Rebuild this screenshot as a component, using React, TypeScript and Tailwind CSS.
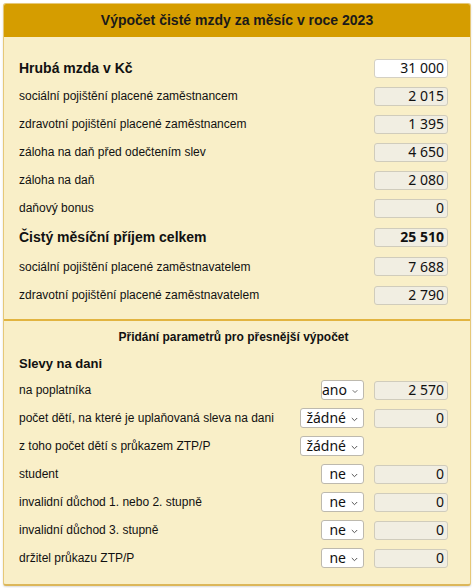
import React from 'react';

type Row = { label: string; value: string; bold?: boolean; editable?: boolean; h?: string };

const mainRows: Row[] = [
  { label: 'Hrubá mzda v Kč', value: '31 000', bold: true, editable: true },
  { label: 'sociální pojištění placené zaměstnancem', value: '2 015' },
  { label: 'zdravotní pojištění placené zaměstnancem', value: '1 395' },
  { label: 'záloha na daň před odečtením slev', value: '4 650' },
  { label: 'záloha na daň', value: '2 080' },
  { label: 'daňový bonus', value: '0' },
  { label: 'Čistý měsíční příjem celkem', value: '25 510', bold: true, h: 'h-[30px]' },
  { label: 'sociální pojištění placené zaměstnavatelem', value: '7 688', h: 'h-[29px]' },
  { label: 'zdravotní pojištění placené zaměstnavatelem', value: '2 790' },
];

type Param = { label: string; option: string; value?: string; wide?: boolean };

const params: Param[] = [
  { label: 'na poplatníka', option: 'ano', value: '2 570' },
  { label: 'počet dětí, na které je uplaňovaná sleva na dani', option: 'žádné', value: '0', wide: true },
  { label: 'z toho počet dětí s průkazem ZTP/P', option: 'žádné', wide: true },
  { label: 'student', option: 'ne', value: '0' },
  { label: 'invalidní důchod 1. nebo 2. stupně', option: 'ne', value: '0' },
  { label: 'invalidní důchod 3. stupně', option: 'ne', value: '0' },
  { label: 'držitel průkazu ZTP/P', option: 'ne', value: '0' },
];

const valueFont = "font-['Noto_Sans',sans-serif]";

// value field: white when editable, greyish when read-only
const ValueBox = ({ value, strong, editable }: { value: string; strong?: boolean; editable?: boolean }) => (
  <div
    className={`w-[74px] h-[19px] rounded-[3px] border flex items-center justify-end pr-[3px] leading-none text-[14px] text-[#111] ${valueFont} ${
      editable ? 'bg-white border-[#d4d0c4]' : 'bg-[#f1eee2] border-[#d0ccbc]'
    } ${strong ? 'font-bold' : ''}`}
  >
    {value}
  </div>
);

const Select = ({ option, wide }: { option: string; wide?: boolean }) => (
  <div
    className={`${wide ? 'w-[64px]' : 'w-[43px]'} h-[20px] rounded-[3px] border border-[#bdb9ae] bg-white flex items-center justify-end gap-[5px] pr-[5px] text-[#111] leading-none text-[14px] ${valueFont}`}
  >
    <span>{option}</span>
    <svg width="7" height="5" viewBox="0 0 7 5" className="mt-[2px]">
      <path d="M0.8 1 L3.5 3.7 L6.2 1" fill="none" stroke="#555" strokeWidth="1" />
    </svg>
  </div>
);

export default function App() {
  return (
    <div className="w-[474px] h-[588px] bg-white p-[3px] pb-[2px] font-['Liberation_Sans',Arial,sans-serif] text-[#111]">
      <div className="h-full flex flex-col border border-[#e6c878] border-b-2 border-b-[#dcb75a] rounded-[3px] overflow-hidden bg-[#f9efc8] shadow-[0_1px_2px_rgba(0,0,0,0.15)]">
        {/* header */}
        <div className="h-[33px] shrink-0 bg-[#d59d00] flex items-center justify-center font-bold text-[14px] text-[#1a1a1a]">
          Výpočet čisté mzdy za měsíc v roce 2023
        </div>

        {/* results */}
        <div className="pt-[17px] pb-[10px] pl-[15px] pr-[22px]">
          {mainRows.map((r) => (
            <div key={r.label} className={`${r.h ?? 'h-[28px]'} flex items-center justify-between`}>
              <span className={r.bold ? 'font-bold text-[14px]' : 'text-[12px]'}>{r.label}</span>
              <ValueBox value={r.value} strong={r.bold && !r.editable} editable={r.editable} />
            </div>
          ))}
        </div>

        <div className="h-[2px] shrink-0 bg-[#e2b440]" />

        {/* parameters */}
        <div className="pt-[6px] pl-[15px] pr-[22px]">
          <div className="h-[20px] flex items-center justify-center font-bold text-[12px]">
            Přidání parametrů pro přesnější výpočet
          </div>
          <div className="h-[24px] mt-[5px] flex items-center font-bold text-[13px]">Slevy na dani</div>
          {params.map((p) => (
            <div key={p.label} className="h-[28px] flex items-center justify-between">
              <span className="text-[12px]">{p.label}</span>
              <div className="flex items-center gap-[10px]">
                <Select option={p.option} wide={p.wide} />
                {p.value !== undefined ? <ValueBox value={p.value} /> : <div className="w-[74px]" />}
              </div>
            </div>
          ))}
        </div>
      </div>
    </div>
  );
}
